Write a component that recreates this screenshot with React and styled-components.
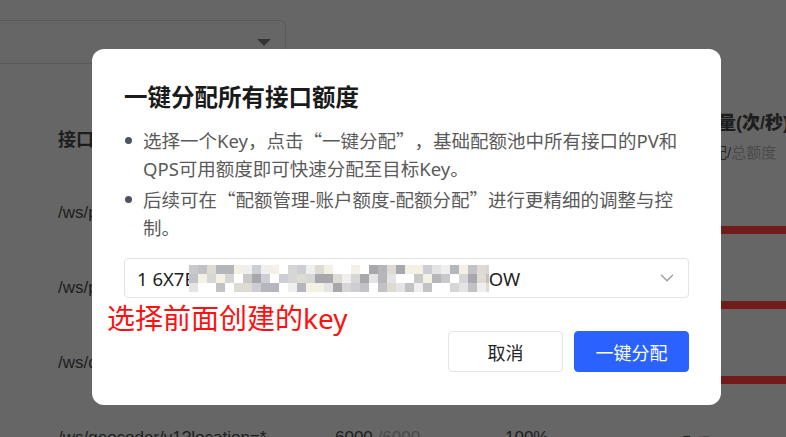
import React from 'react';
import styled, { createGlobalStyle } from 'styled-components';
import { ChevronDown } from 'lucide-react';

const GlobalStyle = createGlobalStyle`
  html, body {
    margin: 0;
    padding: 0;
    overflow: hidden;
  }
  body {
    font-family: "Liberation Sans", "Noto Sans CJK SC", sans-serif;
  }
  * {
    box-sizing: border-box;
  }
`;

const rows = [
  { path: '/ws/place/v1/search', pv: '6000', pvTotal: '6000', rate: '100%', qps: '5', qpsTotal: '5' },
  { path: '/ws/place/v1/suggestion', pv: '6000', pvTotal: '6000', rate: '100%', qps: '5', qpsTotal: '5' },
  { path: '/ws/direction/v1/driving', pv: '6000', pvTotal: '6000', rate: '100%', qps: '5', qpsTotal: '5' },
  { path: '/ws/geocoder/v1?location=*', pv: '6000', pvTotal: '6000', rate: '100%', qps: '5', qpsTotal: '5', last: true },
];

// 打码用的马赛克色块
const palette = ['#d6d6d6', '#c2c2c6', '#e4e4e4', '#b5b5bc', '#cdcdd6', '#efefef', '#a8a8ac', '#dedbd2', '#f4f0e4', '#c9c9c9'];
const mosaic = (() => {
  const out = [];
  let seed = 11;
  const rnd = () => {
    seed = (seed * 9301 + 49297) % 233280;
    return seed / 233280;
  };
  for (let r = 0; r < 3; r++) {
    for (let c = 0; c < 34; c++) {
      const v = rnd();
      if (v < 0.18) continue;
      out.push({ x: c * 9, y: r * 9, fill: palette[Math.floor(rnd() * palette.length)] });
    }
  }
  return out;
})();

function App() {
  return (
    <>
      <GlobalStyle />
      <Page>
        <FilterBox>
          <Caret />
        </FilterBox>
        <Table>
          <HeadRow>
            <HeadCell>接口名称</HeadCell>
            <HeadCell>PV分配量(次/日)</HeadCell>
            <HeadCell>使用率</HeadCell>
            <HeadStack>
              <strong>分配量(次/秒)</strong>
              <small>
                已分配/<em>总额度</em>
              </small>
            </HeadStack>
          </HeadRow>
          {rows.map((row) => (
            <Row key={row.path}>
              <Cell>{row.path}</Cell>
              <Cell>
                {row.pv} <Muted>/{row.pvTotal}</Muted>
              </Cell>
              <Cell>{row.rate}</Cell>
              <QuotaCell>
                <span>
                  {row.qps} <Muted>/{row.qpsTotal}</Muted>
                </span>
                {!row.last && <Bar />}
              </QuotaCell>
            </Row>
          ))}
        </Table>
      </Page>

      <Overlay>
        <Modal>
          <Title>一键分配所有接口额度</Title>
          <Tips>
            <li>
              选择一个Key，点击<Q>“</Q>一键分配<Q>”</Q>，基础配额池中所有接口的PV和QPS可用额度即可快速分配至目标Key。
            </li>
            <li>
              后续可在<Q>“</Q>配额管理-账户额度-配额分配<Q>”</Q>进行更精细的调整与控制。
            </li>
          </Tips>
          <KeySelect>
            <KeyValue>
              1 6X7E
              <svg width="300" height="27" viewBox="0 0 300 27" style={{ marginLeft: -6, flexShrink: 0 }}>
                {mosaic.map((b, i) => (
                  <rect key={i} x={b.x} y={b.y} width="9" height="9" fill={b.fill} />
                ))}
              </svg>
              OW
            </KeyValue>
            <ChevronDown size={22} strokeWidth={1.4} color="#9a9a9a" />
          </KeySelect>
          <Note>选择前面创建的key</Note>
          <Footer>
            <Button>取消</Button>
            <Button $primary>一键分配</Button>
          </Footer>
        </Modal>
      </Overlay>
    </>
  );
}

const Page = styled.div`
  width: 100vw;
  height: 100vh;
  overflow: hidden;
  background: #666666;
  display: flex;
  flex-direction: column;
  padding: 20px 0 0 58px;
  color: #1d1d1d;
`;

const FilterBox = styled.div`
  margin-left: -72px;
  width: 300px;
  height: 44px;
  flex-shrink: 0;
  border: 1px solid #595959;
  border-radius: 6px;
  display: flex;
  align-items: center;
  justify-content: flex-end;
  padding-right: 14px;
`;

const Caret = styled.span`
  width: 0;
  height: 0;
  border-left: 7px solid transparent;
  border-right: 7px solid transparent;
  border-top: 7px solid #363636;
`;

const Table = styled.div`
  margin-top: 36px;
  display: flex;
  flex-direction: column;
`;

const Row = styled.div`
  display: grid;
  grid-template-columns: 277px 170px 177px 1fr;
  height: 75px;
  align-items: center;
  font-size: 17px;
  white-space: nowrap;
`;

const HeadRow = styled(Row)`
  font-weight: bold;
  font-size: 18px;
`;

const HeadCell = styled.div`
  overflow: hidden;
`;

const HeadStack = styled.div`
  display: flex;
  flex-direction: column;
  strong {
    line-height: 30px;
    font-size: 18px;
  }
  small {
    line-height: 30px;
    font-size: 15px;
    font-weight: normal;
    color: #262626;
  }
  em {
    font-style: normal;
    color: #4a4a4a;
  }
`;

const Cell = styled.div`
  overflow: hidden;
`;

const Muted = styled.span`
  color: #4a4a4a;
`;

const QuotaCell = styled.div`
  display: flex;
  flex-direction: column;
  padding-top: 11px;
  span {
    line-height: 20px;
  }
`;

const Bar = styled.div`
  margin-top: 3px;
  height: 8px;
  width: 100%;
  background: #711b1b;
`;

const Overlay = styled.div`
  position: fixed;
  inset: 0;
  display: flex;
  align-items: flex-start;
  padding: 49px 0 0 92px;
`;

const Modal = styled.div`
  position: relative;
  width: 629px;
  background: #ffffff;
  border-radius: 12px;
  padding: 32px 32px 33px;
  font-family: "Noto Sans", "Noto Sans CJK SC", sans-serif;
`;

const Title = styled.h2`
  margin: 0;
  font-size: 23.5px;
  line-height: 32px;
  font-weight: 700;
  color: #1a1a1a;
`;

const Tips = styled.ul`
  margin: 13px 0 0;
  padding: 0 6px 0 19px;
  list-style: none;
  font-size: 18.5px;
  line-height: 28px;
  color: #5a5a5a;
  li {
    position: relative;
  }
  li + li {
    margin-top: 2px;
  }
  li::before {
    content: '';
    position: absolute;
    left: -18px;
    top: 11px;
    width: 7px;
    height: 7px;
    border-radius: 50%;
    background: #4d5461;
  }
`;

// 中文引号用全角字形
const Q = styled.span`
  font-family: "Noto Sans CJK SC", sans-serif;
  display: inline-block;
  width: 1em;
  text-align: center;
`;

const KeySelect = styled.div`
  margin-top: 16px;
  height: 40px;
  border: 1px solid #e3e3e3;
  border-radius: 4px;
  display: flex;
  align-items: center;
  justify-content: space-between;
  padding: 0 10px 0 12px;
`;

const KeyValue = styled.div`
  display: flex;
  align-items: center;
  font-size: 18.5px;
  color: #1f1f1f;
  white-space: pre;
`;

const Note = styled.div`
  position: absolute;
  left: 15px;
  top: 250px;
  font-size: 28px;
  line-height: 38px;
  color: #ff1010;
`;

const Footer = styled.div`
  margin-top: 33px;
  display: flex;
  justify-content: flex-end;
  gap: 11px;
`;

const Button = styled.button`
  width: 115px;
  height: 41px;
  border-radius: 4px;
  font-family: inherit;
  font-size: 18px;
  cursor: pointer;
  border: 1px solid ${(p) => (p.$primary ? '#2962ff' : '#e3e3e3')};
  background: ${(p) => (p.$primary ? '#2962ff' : '#ffffff')};
  color: ${(p) => (p.$primary ? '#ffffff' : '#262626')};
`;

export default App;
